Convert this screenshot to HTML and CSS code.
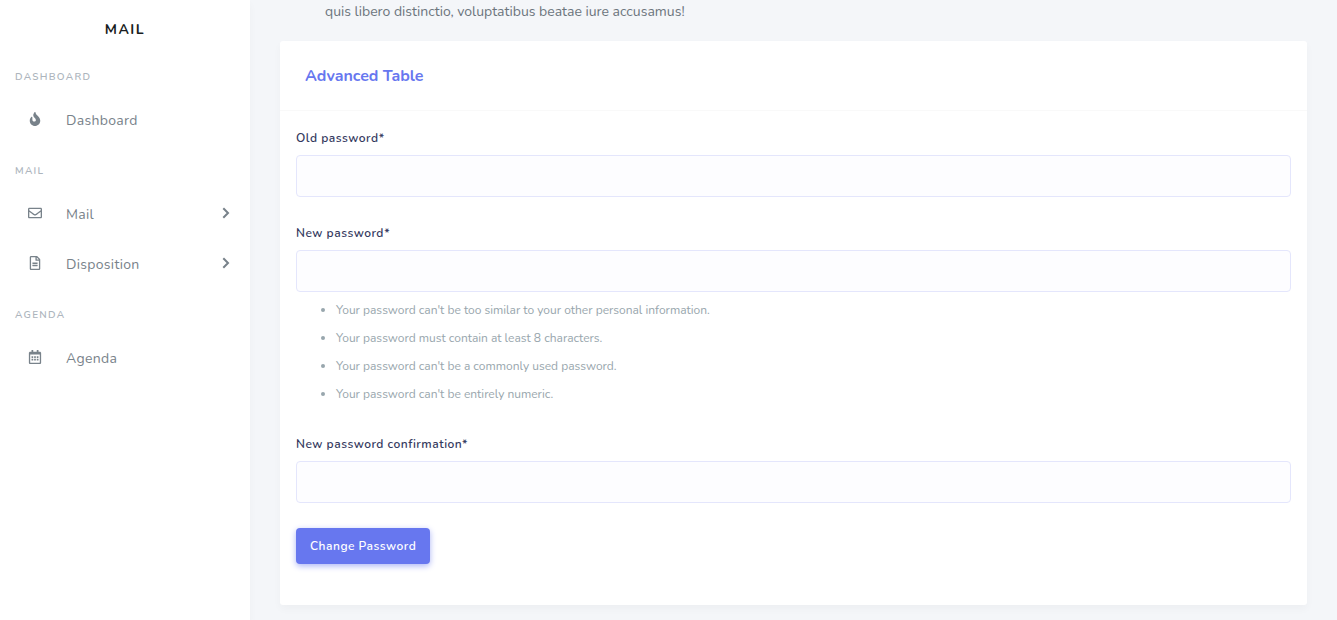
FILE: index.html
```html
<!DOCTYPE html>
<html lang="en">
<head>
<meta charset="utf-8">
<title>Change Password</title>
<link rel="stylesheet" href="styles.css">
</head>
<body>
<div class="layout">
  <aside class="sidebar">
    <a class="brand" href="#">MAIL</a>
    <nav>
      <h2 class="menu-header">DASHBOARD</h2>
      <ul class="menu">
        <li><a class="menu-link" href="#">
          <svg class="icon" viewBox="0 0 384 512" aria-hidden="true"><path d="M216 23.860c0-23.800-30.650-32.770-44.150-13.040C48 191.850 224 200 224 288c0 35.630-29.110 64.460-64.850 63.990-35.170-.45-63.150-29.770-63.150-64.940v-85.510c0-21.700-26.470-32.230-41.430-16.500C27.800 213.160 0 261.330 0 320c0 105.870 86.130 192 192 192s192-86.130 192-192c0-170.290-168-193.170-168-296.140z"/></svg>
          <span>Dashboard</span></a></li>
      </ul>
      <h2 class="menu-header">MAIL</h2>
      <ul class="menu">
        <li><a class="menu-link" href="#">
          <svg class="icon" viewBox="0 0 512 512" aria-hidden="true"><path d="M464 64H48C21.490 64 0 85.490 0 112v288c0 26.510 21.490 48 48 48h416c26.510 0 48-21.490 48-48V112c0-26.510-21.490-48-48-48zm0 48v40.805c-22.422 18.259-58.168 46.651-134.587 106.490-16.841 13.247-50.201 45.072-73.413 44.701-23.208.375-56.579-31.459-73.413-44.701C106.180 199.465 70.425 171.067 48 152.805V112h416zM48 400V214.398c22.914 18.251 55.409 43.862 104.938 82.646 21.857 17.205 60.134 55.186 103.062 54.955 42.717.231 80.509-37.199 103.053-54.947 49.528-38.783 82.032-64.401 104.947-82.653V400H48z"/></svg>
          <span>Mail</span>
          <svg class="chevron" viewBox="0 0 8 12" aria-hidden="true"><path d="M1.300 1.300 6 6l-4.700 4.700"/></svg></a></li>
        <li><a class="menu-link" href="#">
          <svg class="icon" viewBox="0 0 384 512" aria-hidden="true"><path d="M288 248v28c0 6.600-5.400 12-12 12H108c-6.600 0-12-5.400-12-12v-28c0-6.600 5.400-12 12-12h168c6.600 0 12 5.400 12 12zm-12 72H108c-6.600 0-12 5.400-12 12v28c0 6.600 5.400 12 12 12h168c6.600 0 12-5.400 12-12v-28c0-6.600-5.400-12-12-12zm108-188.100V464c0 26.500-21.500 48-48 48H48c-26.500 0-48-21.500-48-48V48C0 21.500 21.500 0 48 0h204.100C264.800 0 277 5.100 286 14.100L369.900 98c9 8.900 14.100 21.200 14.100 33.900zm-128-80V128h76.100L256 51.900zM336 464V176H232c-13.300 0-24-10.700-24-24V48H48v416h288z"/></svg>
          <span>Disposition</span>
          <svg class="chevron" viewBox="0 0 8 12" aria-hidden="true"><path d="M1.300 1.300 6 6l-4.700 4.700"/></svg></a></li>
      </ul>
      <h2 class="menu-header">AGENDA</h2>
      <ul class="menu">
        <li><a class="menu-link" href="#">
          <svg class="icon" viewBox="0 0 448 512" aria-hidden="true"><path d="M148 288h-40c-6.600 0-12-5.400-12-12v-40c0-6.600 5.400-12 12-12h40c6.600 0 12 5.400 12 12v40c0 6.600-5.400 12-12 12zm108-12v-40c0-6.600-5.400-12-12-12h-40c-6.600 0-12 5.400-12 12v40c0 6.600 5.400 12 12 12h40c6.600 0 12-5.400 12-12zm96 0v-40c0-6.600-5.400-12-12-12h-40c-6.600 0-12 5.400-12 12v40c0 6.600 5.400 12 12 12h40c6.600 0 12-5.400 12-12zm-96 96v-40c0-6.600-5.400-12-12-12h-40c-6.600 0-12 5.400-12 12v40c0 6.600 5.400 12 12 12h40c6.600 0 12-5.400 12-12zm-96 0v-40c0-6.600-5.400-12-12-12h-40c-6.600 0-12 5.400-12 12v40c0 6.600 5.400 12 12 12h40c6.600 0 12-5.400 12-12zm192 0v-40c0-6.600-5.400-12-12-12h-40c-6.600 0-12 5.400-12 12v40c0 6.600 5.400 12 12 12h40c6.600 0 12-5.400 12-12zm96-260v352c0 26.500-21.500 48-48 48H48c-26.500 0-48-21.500-48-48V112c0-26.500 21.500-48 48-48h48V12c0-6.600 5.400-12 12-12h40c6.600 0 12 5.400 12 12v52h128V12c0-6.600 5.400-12 12-12h40c6.600 0 12 5.400 12 12v52h48c26.500 0 48 21.500 48 48zm-48 346V160H48v298c0 3.300 2.700 6 6 6h340c3.300 0 6-2.700 6-6z"/></svg>
          <span>Agenda</span></a></li>
      </ul>
    </nav>
  </aside>
  <main class="content">
    <p class="lead">quis libero distinctio, voluptatibus beatae iure accusamus!</p>
    <section class="card">
      <header class="card-header"><h1 class="card-title">Advanced Table</h1></header>
      <form class="card-body">
        <div class="field">
          <label for="old-password">Old password*</label>
          <input id="old-password" type="password">
        </div>
        <div class="field">
          <label for="new-password">New password*</label>
          <input id="new-password" type="password" aria-describedby="password-rules">
          <ul class="rules" id="password-rules">
            <li>Your password can't be too similar to your other personal information.</li>
            <li>Your password must contain at least 8 characters.</li>
            <li>Your password can't be a commonly used password.</li>
            <li>Your password can't be entirely numeric.</li>
          </ul>
        </div>
        <div class="field">
          <label for="confirm-password">New password confirmation*</label>
          <input id="confirm-password" type="password">
        </div>
        <button class="submit" type="button">Change Password</button>
      </form>
    </section>
  </main>
</div>
</body>
</html>
```
FILE: styles.css
```css
* { box-sizing: border-box; }
body {
  margin: 0;
  background: #f4f6f9;
  color: #6c757d;
  font: 400 14px/24px Nunito, "Open Sans", sans-serif;
}
h1, h2, p, ul { margin: 0; padding: 0; }
a { color: inherit; text-decoration: none; }

.layout { display: flex; min-height: 100vh; }
.sidebar {
  flex: 0 0 250px;
  background: #fff;
  box-shadow: 0 4px 8px rgba(0, 0, 0, .03);
}
.brand {
  display: block;
  padding: 18px 0 9px;
  color: #191d21;
  font-weight: 700;
  letter-spacing: 1.5px;
  text-align: center;
}
.menu-header {
  padding: 14px 15px 6px;
  color: #adb5bd;
  font-size: 10px;
  font-weight: 600;
  letter-spacing: 1.3px;
}
.menu { list-style: none; }
.menu-link {
  display: flex;
  align-items: center;
  height: 50px;
  padding: 2px 20px 0;
  color: #78828a;
  letter-spacing: .3px;
}
.icon {
  width: 30px;
  height: 14px;
  margin: 0 16px 4px 0;
  fill: currentColor;
}
.chevron {
  width: 8px;
  height: 12px;
  margin: 0 0 4px auto;
  fill: none;
  stroke: currentColor;
  stroke-width: 2;
}

.content { flex: 1; min-width: 0; padding: 0 30px 15px; }
.lead { padding: 0 45px 18px; line-height: 23px; }
.card {
  background: #fff;
  border-radius: 3px;
  box-shadow: 0 4px 8px rgba(0, 0, 0, .03);
}
.card-header {
  padding: 23px 25px 22px;
  border-bottom: 1px solid #f9f9f9;
}
.card-title { color: #6777ef; font-size: 16px; font-weight: 700; line-height: 24px; }
.card-body { padding: 16px 16px 41px; }
.field { margin-bottom: 25px; }
label {
  display: block;
  margin-bottom: 6px;
  color: #34395e;
  font-size: 12px;
  font-weight: 600;
  line-height: 22px;
  letter-spacing: .5px;
}
input {
  display: block;
  width: 100%;
  height: 42px;
  padding: 10px 15px;
  border: 1px solid #e4e6fc;
  border-radius: 4px;
  background: #fdfdff;
  color: #495057;
  font: inherit;
}
.rules {
  padding: 4px 0 0 40px;
  color: #98a6ad;
  font-size: 12px;
  line-height: 28px;
}
.submit {
  display: block;
  height: 36px;
  padding: 0 14px;
  border: 0;
  border-radius: 4px;
  background: #6777ef;
  box-shadow: 0 2px 6px #acb5f6;
  color: #fff;
  font: inherit;
  font-size: 12px;
  font-weight: 600;
  letter-spacing: .5px;
}
```
